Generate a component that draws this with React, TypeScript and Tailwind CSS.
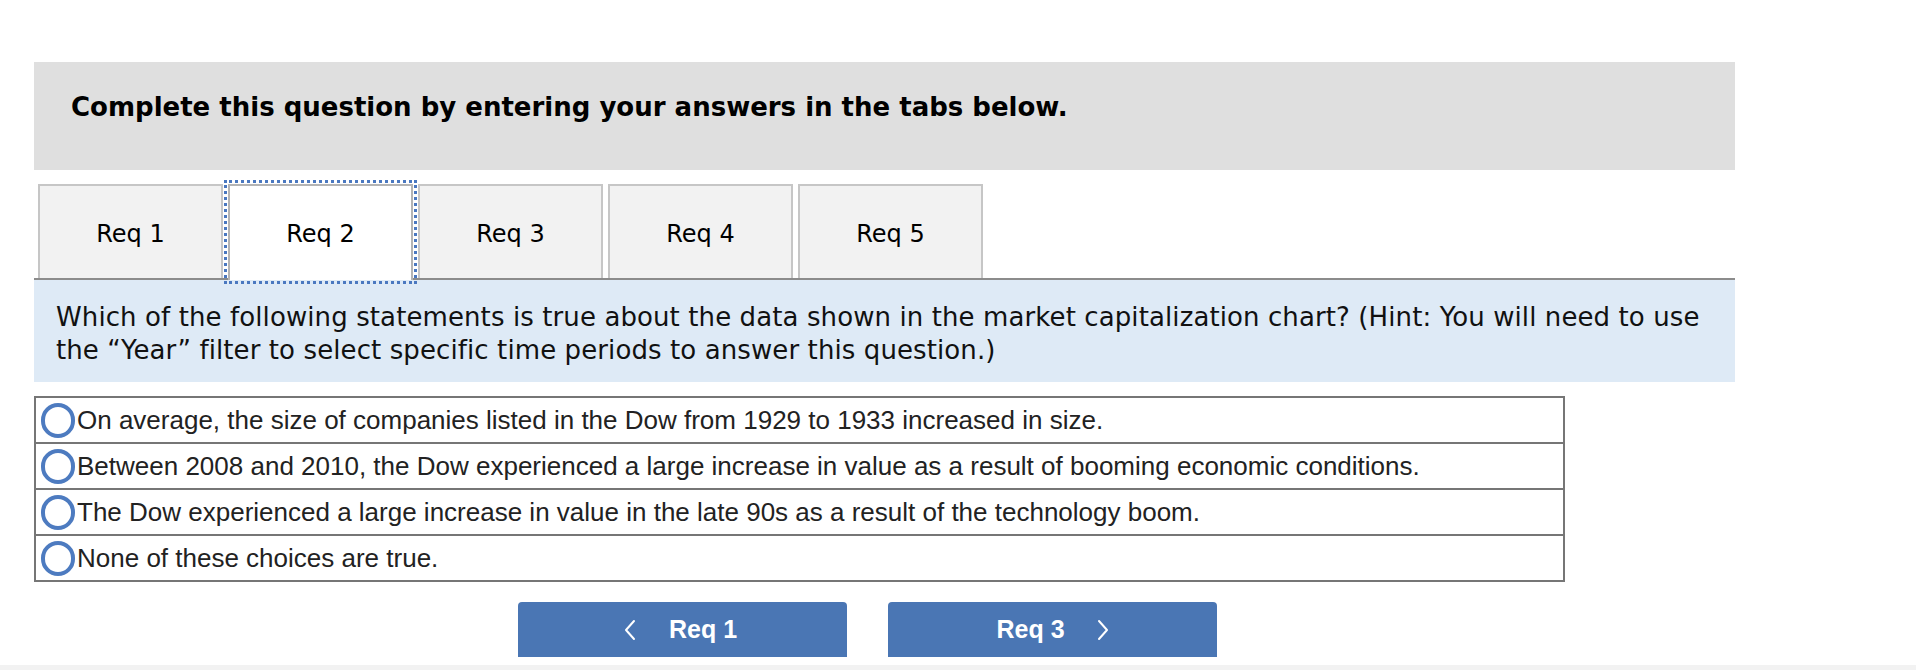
import React from 'react';

const tabs = ['Req 1', 'Req 2', 'Req 3', 'Req 4', 'Req 5'];

const choices = [
  'On average, the size of companies listed in the Dow from 1929 to 1933 increased in size.',
  'Between 2008 and 2010, the Dow experienced a large increase in value as a result of booming economic conditions.',
  'The Dow experienced a large increase in value in the late 90s as a result of the technology boom.',
  'None of these choices are true.',
];

const tahoma = { fontFamily: '"DejaVu Sans", Verdana, sans-serif' };
const arial = { fontFamily: '"Liberation Sans", Arial, sans-serif' };

function Chevron({ dir }: { dir: 'left' | 'right' }) {
  return (
    <svg width="12" height="22" viewBox="0 0 12 22" fill="none">
      <polyline
        points={dir === 'left' ? '10,2 2,11 10,20' : '2,2 10,11 2,20'}
        stroke="white"
        strokeWidth="2"
        strokeLinecap="round"
        strokeLinejoin="round"
      />
    </svg>
  );
}

export default function App() {
  const active = 1;

  return (
    <div className="w-[1916px] h-[670px] bg-white overflow-hidden flex flex-col">
      <div className="ml-[34px] mt-[62px] w-[1701px]">
        {/* header */}
        <div
          className="h-[108px] bg-[#dfdfdf] pl-[37px] pt-[30px] text-[26px] leading-[30px] font-bold text-black"
          style={tahoma}
        >
          Complete this question by entering your answers in the tabs below.
        </div>

        {/* tabs */}
        <div className="mt-[14px] pl-[4px] flex items-start gap-[5px] h-[94px]" style={tahoma}>
          {tabs.map((t, i) =>
            i === active ? (
              <div
                key={t}
                className="relative z-10 w-[185px] h-[96px] bg-white border-2 border-b-0 border-[#b4b4b4] outline-[3px] outline-dotted outline-[#4a78c0] outline-offset-[1px] flex items-center justify-center pt-[2px] text-[24px] text-black"
              >
                {t}
              </div>
            ) : (
              <div
                key={t}
                className="w-[185px] h-[94px] bg-[#f2f2f2] border-2 border-b-0 border-[#c6c6c6] flex items-center justify-center pt-[4px] text-[24px] text-black"
              >
                {t}
              </div>
            )
          )}
        </div>

        {/* question */}
        <div
          className="border-t-2 border-[#8c8c8c] bg-[#deeaf6] pl-[22px] pt-[21px] pb-[15px] text-[26px] leading-[33px] tracking-[0.1px] text-[#111] whitespace-nowrap"
          style={tahoma}
        >
          Which of the following statements is true about the data shown in the market capitalization chart? (Hint: You will need to use
          <br />
          the “Year” filter to select specific time periods to answer this question.)
        </div>

        {/* choices */}
        <div className="mt-[14px] w-[1531px] border-2 border-[#767676]" style={arial}>
          {choices.map((c, i) => (
            <div
              key={c}
              className={`flex items-center pl-[5px] gap-[2px] ${
                i < choices.length - 1 ? 'h-[46px] border-b-2 border-[#767676]' : 'h-[44px]'
              }`}
            >
              <span className="w-[34px] h-[35px] rounded-full border-[4px] border-[#4d7bc0] shrink-0" />
              <span className="text-[26px] text-[#222] whitespace-nowrap">{c}</span>
            </div>
          ))}
        </div>

        {/* nav buttons */}
        <div className="mt-[20px] ml-[484px] flex gap-[41px]" style={arial}>
          <button className="w-[329px] h-[55px] rounded-t-[4px] bg-[#4a76b4] flex items-center justify-center gap-[33px] pr-[4px] text-white font-bold text-[25px]">
            <Chevron dir="left" />
            <span>Req 1</span>
          </button>
          <button className="w-[329px] h-[55px] rounded-t-[4px] bg-[#4a76b4] flex items-center justify-center gap-[32px] text-white font-bold text-[25px]">
            <span>Req 3</span>
            <Chevron dir="right" />
          </button>
        </div>
      </div>

      <div className="mt-auto h-[5px] bg-[#f2f2f2]" />
    </div>
  );
}
